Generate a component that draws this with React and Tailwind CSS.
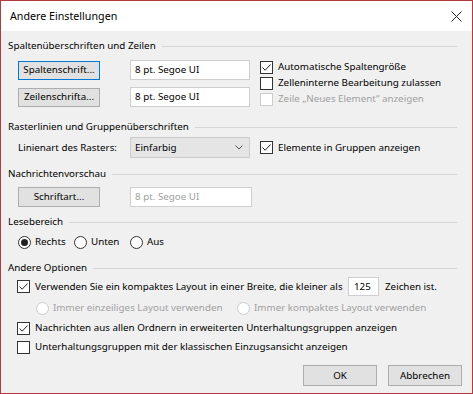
import React from "react";

const font = { fontFamily: '"Noto Sans", "Liberation Sans", sans-serif' };

function GroupHeader({ title, className }) {
  return (
    <div className={"flex items-center h-[18px] pr-[15px] " + (className || "")}>
      <span className="whitespace-nowrap">{title}</span>
      <div className="flex-1 h-px bg-[#d5d5d5] ml-[6px]" />
    </div>
  );
}

function CheckBox({ checked, disabled, label, className }) {
  return (
    <div className={"flex items-center h-[18px] " + (className || "")}>
      <div
        className={
          "w-[13px] h-[13px] border bg-white flex items-center justify-center shrink-0 " +
          (disabled ? "border-[#cccccc]" : "border-[#333333]")
        }
      >
        {checked && (
          <svg width="11" height="11" viewBox="0 0 11 11">
            <path d="M1.5 5.5 L4.2 8.2 L9.5 2.5" fill="none" stroke="#222" strokeWidth="1" />
          </svg>
        )}
      </div>
      <span className={"ml-[5px] whitespace-nowrap " + (disabled ? "text-[#a0a0a0]" : "")}>{label}</span>
    </div>
  );
}

function Radio({ checked, disabled, label, className }) {
  return (
    <div className={"flex items-center h-[18px] " + (className || "")}>
      <div
        className={
          "w-[13px] h-[13px] rounded-full border bg-white flex items-center justify-center shrink-0 " +
          (disabled ? "border-[#cccccc]" : "border-[#333333]")
        }
      >
        {checked && <div className="w-[7px] h-[7px] rounded-full bg-[#222]" />}
      </div>
      <span className={"ml-[4px] whitespace-nowrap " + (disabled ? "text-[#a0a0a0]" : "")}>{label}</span>
    </div>
  );
}

function Button({ children, focused, className }) {
  return (
    <div
      className={
        "flex items-center justify-center bg-[#e1e1e1] border " +
        (focused ? "border-[#0078d7]" : "border-[#adadad]") +
        " " +
        (className || "")
      }
    >
      {children}
    </div>
  );
}

function TextBox({ value, disabled, className }) {
  return (
    <div
      className={
        "flex items-center bg-white border border-[#cfcfcf] pl-[4px] " +
        (disabled ? "text-[#a0a0a0] " : "") +
        (className || "")
      }
    >
      {value}
    </div>
  );
}

export default function App() {
  return (
    <div
      className="w-[473px] h-[394px] bg-[#f0f0f0] border border-[#b5393f] flex flex-col text-[9.8px] text-black leading-none"
      style={font}
    >
      <div className="h-[30px] bg-white flex items-center justify-between pl-[9px] pr-[9px] shrink-0">
        <span className="text-[10.7px]">Andere Einstellungen</span>
        <svg width="11" height="11" viewBox="0 0 11 11" className="mr-[1px]">
          <path d="M0.5 0.5 L10.5 10.5 M10.5 0.5 L0.5 10.5" stroke="#222" strokeWidth="1" />
        </svg>
      </div>

      <div className="flex flex-col pl-[7px]">
        <GroupHeader title="Spaltenüberschriften und Zeilen" className="mt-[6px]" />
        <div className="flex mt-[5px] h-[47px]">
          <div className="flex flex-col gap-[7px] pl-[10px]">
            <div className="flex items-center h-[20px]">
              <Button focused className="w-[82px] h-[19px]">Spaltenschrift...</Button>
              <TextBox value="8 pt. Segoe UI" className="ml-[30px] w-[120px] h-[20px]" />
            </div>
            <div className="flex items-center h-[20px]">
              <Button className="w-[82px] h-[19px]">Zeilenschrifta...</Button>
              <TextBox value="8 pt. Segoe UI" className="ml-[30px] w-[120px] h-[20px]" />
            </div>
          </div>
          <div className="flex flex-col ml-[10px] -mt-[1px]">
            <CheckBox checked label="Automatische Spaltengröße" />
            <CheckBox label="Zelleninterne Bearbeitung zulassen" />
            <CheckBox disabled label="Zeile „Neues Element“ anzeigen" />
          </div>
        </div>

        <GroupHeader title="Rasterlinien und Gruppenüberschriften" className="mt-[11px]" />
        <div className="flex items-center h-[21px] mt-[1px] pl-[10px]">
          <span className="w-[112px] whitespace-nowrap">Linienart des Rasters:</span>
          <div className="w-[120px] h-[21px] bg-[#e5e5e5] border border-[#cccccc] flex items-center justify-between pl-[4px] pr-[6px]">
            <span>Einfarbig</span>
            <svg width="8" height="5" viewBox="0 0 8 5">
              <path d="M0.5 0.5 L4 4 L7.5 0.5" fill="none" stroke="#555" strokeWidth="1" />
            </svg>
          </div>
          <CheckBox checked label="Elemente in Gruppen anzeigen" className="ml-[10px]" />
        </div>

        <GroupHeader title="Nachrichtenvorschau" className="mt-[7px]" />
        <div className="flex items-center h-[20px] mt-[4px] pl-[10px]">
          <Button className="w-[82px] h-[20px]">Schriftart...</Button>
          <TextBox disabled value="8 pt. Segoe UI" className="ml-[30px] w-[122px] h-[20px]" />
        </div>

        <GroupHeader title="Lesebereich" className="mt-[6px]" />
        <div className="flex items-center mt-[2px] pl-[10px]">
          <Radio checked label="Rechts" className="w-[56px]" />
          <Radio label="Unten" className="w-[56px]" />
          <Radio label="Aus" />
        </div>

        <GroupHeader title="Andere Optionen" className="mt-[8px]" />
        <div className="flex items-center h-[19px] pl-[9px]">
          <CheckBox checked label="Verwenden Sie ein kompaktes Layout in einer Breite, die kleiner als" className="w-[331px]" />
          <TextBox value="125" className="w-[31px] h-[19px] pl-[5px]" />
          <span className="ml-[6px]">Zeichen ist.</span>
        </div>
        <div className="flex items-center mt-[3px] pl-[28px]">
          <Radio disabled label="Immer einzeiliges Layout verwenden" className="w-[201px]" />
          <Radio disabled label="Immer kompaktes Layout verwenden" />
        </div>
        <CheckBox checked label="Nachrichten aus allen Ordnern in erweiterten Unterhaltungsgruppen anzeigen" className="mt-[2px] ml-[9px]" />
        <CheckBox label="Unterhaltungsgruppen mit der klassischen Einzugsansicht anzeigen" className="mt-[1px] ml-[9px]" />

        <div className="flex justify-end gap-[11px] mt-[9px] pr-[10px]">
          <Button className="w-[74px] h-[21px]">OK</Button>
          <Button className="w-[74px] h-[21px]">Abbrechen</Button>
        </div>
      </div>
    </div>
  );
}
